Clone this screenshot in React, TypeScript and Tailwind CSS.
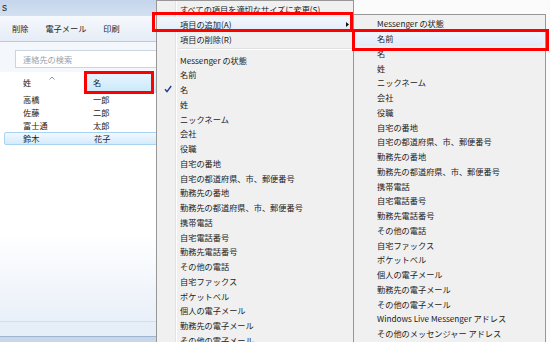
import React from 'react';

const fields = [
  'Messenger の状態',
  '名前',
  '名',
  '姓',
  'ニックネーム',
  '会社',
  '役職',
  '自宅の番地',
  '自宅の都道府県、市、郵便番号',
  '勤務先の番地',
  '勤務先の都道府県、市、郵便番号',
  '携帯電話',
  '自宅電話番号',
  '勤務先電話番号',
  'その他の電話',
  '自宅ファックス',
  'ポケットベル',
  '個人の電子メール',
  '勤務先の電子メール',
  'その他の電子メール',
];

const extraFields = ['Windows Live Messenger アドレス', 'その他のメッセンジャー アドレス'];

const contacts = [
  { last: '高橋', first: '一郎' },
  { last: '佐藤', first: '二郎' },
  { last: '富士通', first: '太郎' },
  { last: '鈴木', first: '花子', selected: true },
];

interface ItemProps {
  label: string;
  highlighted?: boolean;
  checked?: boolean;
  arrow?: boolean;
}

const MenuItem: React.FC<ItemProps> = ({ label, highlighted, checked, arrow }) => (
  <div
    className={`mx-[2px] flex h-[14.75px] items-center rounded-[3px] ${
      highlighted ? 'bg-gradient-to-b from-[#f2f7fd] to-[#e1ebf8]' : ''
    }`}
  >
    <div className="flex w-[21px] shrink-0 justify-start pl-[5px]">
      {checked && (
        <svg width="8" height="8" viewBox="0 0 8 8">
          <path d="M1 4.2 L3 6.6 L7.2 1" fill="none" stroke="#1f3f8f" strokeWidth="1.4" />
        </svg>
      )}
    </div>
    <span className="whitespace-nowrap">{label}</span>
    {arrow && (
      <svg className="ml-auto mr-[2px]" width="3" height="5" viewBox="0 0 3 5">
        <polygon points="0,0 3,2.5 0,5" fill="#111" />
      </svg>
    )}
  </div>
);

const App: React.FC = () => {
  return (
    <div className="relative flex h-[342px] w-[550px] overflow-hidden bg-white font-['Noto_Sans_CJK_JP','Noto_Sans',sans-serif] text-[8.2px] leading-none text-[#1c1c1c]">
      {/* contacts window */}
      <div className="flex w-[170px] shrink-0 flex-col">
        <div className="flex h-[16px] items-center bg-gradient-to-b from-[#c4d5ec] to-[#d3e0f1] pl-[2px] font-['Liberation_Sans',sans-serif] text-[10px] text-[#1e1e1e]">
          s
        </div>
        <div className="flex h-[26px] items-center gap-[17px] border-b border-[#b9c8db] bg-gradient-to-b from-[#f6f9fd] to-[#e5ecf6] pl-[12px]">
          <span>削除</span>
          <span>電子メール</span>
          <span>印刷</span>
        </div>
        <div className="h-[30px] bg-[#f4f7fb] pl-[15px] pt-[8px]">
          <div className="flex h-[18px] items-center border border-[#cbd5e2] bg-white pl-[7px] text-[#9aa2ad]">
            連絡先の検索
          </div>
        </div>
        <div className="flex flex-1 flex-col bg-gradient-to-b from-white from-[60%] to-[#e4ecf7]">
          <div className="ml-[4px] flex h-[21px] items-stretch">
            <div className="flex w-[82px] items-center pl-[19px]">
              <span>姓</span>
              <svg className="ml-[18px] mb-[9px]" width="6" height="4" viewBox="0 0 6 4">
                <path d="M0.5 3.5 L3 1 L5.5 3.5" fill="none" stroke="#8a96a6" strokeWidth="1" />
              </svg>
            </div>
            <div className="flex flex-1 items-center bg-gradient-to-b from-[#eaf7fe] to-[#c8e8f9] pl-[7px]">名</div>
          </div>
          {contacts.map((c) => (
            <div
              key={c.last}
              className={`ml-[4px] flex h-[13px] items-center rounded-[2px] ${
                c.selected ? 'border border-[#a8d3f1] bg-gradient-to-b from-[#f1f8fe] to-[#d5ebfb]' : ''
              }`}
            >
              <span className={`w-[82px] ${c.selected ? 'pl-[18px]' : 'pl-[19px]'}`}>{c.last}</span>
              <span className="pl-[7px]">{c.first}</span>
            </div>
          ))}
          <div className="flex-1" />
          <div className="h-[15px] border-t border-[#d5dfeb] bg-[#e6eef8]" />
          <div className="h-[6px] border-t border-[#9db5d4] bg-[#c9d6e6]" />
        </div>
      </div>
      <div className="flex-1 bg-[#fbfbfb]" />

      {/* context menu */}
      <div className="absolute left-[156px] top-0 h-[360px] w-[198px] border border-[#979797] bg-[#f0f0f0] pt-[1px]">
        <div className="absolute bottom-0 left-[18px] top-0 w-px bg-[#e2e3e3]" />
        <div className="absolute bottom-0 left-[19px] top-0 w-px bg-white" />
        <div className="relative">
          <MenuItem label="すべての項目を適切なサイズに変更(S)" />
          <MenuItem label="項目の追加(A)" highlighted arrow />
          <MenuItem label="項目の削除(R)" />
          <div className="flex h-[6px] flex-col justify-center pl-[22px] pr-[1px]">
            <div className="h-px bg-[#e0e0e0]" />
            <div className="h-px bg-white" />
          </div>
          {fields.map((f) => (
            <MenuItem key={f} label={f} checked={f === '名'} />
          ))}
        </div>
      </div>

      {/* submenu */}
      <div className="absolute left-[353px] top-[14px] h-[340px] w-[193px] border border-[#979797] bg-[#f0f0f0] pt-[1px]">
        {[...fields, ...extraFields].map((f) => (
          <MenuItem key={f} label={f} highlighted={f === '名前'} />
        ))}
      </div>

      {/* annotation boxes */}
      <div className="absolute left-[152px] top-[12px] h-[20px] w-[201px] border-[3px] border-[#ff0000]" />
      <div className="absolute left-[352px] top-[29px] h-[22px] w-[197px] border-[3px] border-[#ff0000]" />
      <div className="absolute left-[84px] top-[71px] h-[23px] w-[70px] border-[3px] border-[#ff0000]" />
    </div>
  );
};

export default App;
